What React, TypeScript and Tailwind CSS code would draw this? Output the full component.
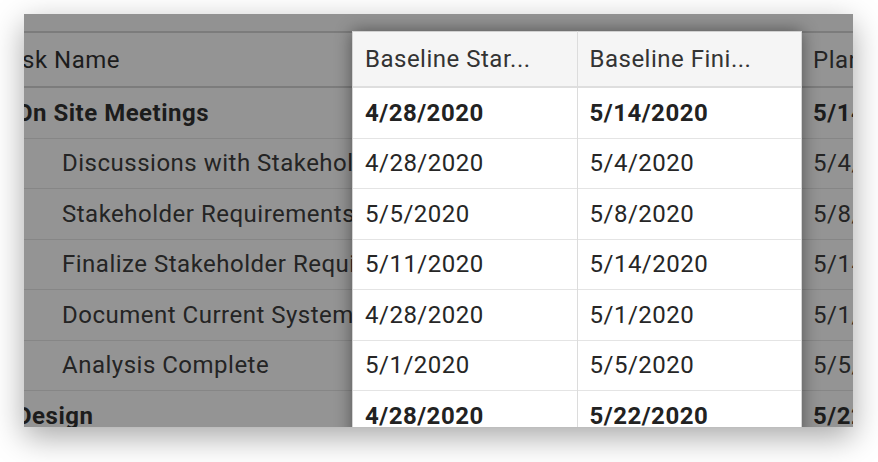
import React from "react";

type Row = { name: string; bold?: boolean; child?: boolean; bs: string; bf: string; p: string };

const rows: Row[] = [
  { name: "On Site Meetings", bold: true, bs: "4/28/2020", bf: "5/14/2020", p: "5/14/2020" },
  { name: "Discussions with Stakeholders", child: true, bs: "4/28/2020", bf: "5/4/2020", p: "5/4/2020" },
  { name: "Stakeholder Requirements", child: true, bs: "5/5/2020", bf: "5/8/2020", p: "5/8/2020" },
  { name: "Finalize Stakeholder Requirements", child: true, bs: "5/11/2020", bf: "5/14/2020", p: "5/14/2020" },
  { name: "Document Current Systems", child: true, bs: "4/28/2020", bf: "5/1/2020", p: "5/1/2020" },
  { name: "Analysis Complete", child: true, bs: "5/1/2020", bf: "5/5/2020", p: "5/5/2020" },
  { name: "Design", bold: true, bs: "4/28/2020", bf: "5/22/2020", p: "5/22/2020" },
];

const font = { fontFamily: "Roboto, 'Liberation Sans', sans-serif" };

export default function App() {
  return (
    <div className="w-[878px] h-[462px] bg-white pt-[14px] pl-[24px]" style={font}>
      <div className="w-[829px] h-[413px] overflow-hidden bg-[#949494] shadow-[0_10px_30px_rgba(0,0,0,0.35)] flex flex-col">
        <div className="h-[17px] shrink-0 bg-[#929292]" />
        <div className="flex flex-1 text-[24px] tracking-[0.5px] whitespace-nowrap">
          {/* Task column */}
          <div className="w-[328px] shrink-0 overflow-hidden text-[#1c1c1c]">
            <div className="h-[57px] border-t-2 border-b-2 border-[#7c7c7c] flex items-center ml-[-29px]">
              Task Name
            </div>
            {rows.map((r, i) => (
              <div
                key={i}
                className={`h-[50.5px] border-b border-[#868686] flex items-center ${r.child ? "pl-[38px] text-[#242424]" : "ml-[-8px] font-bold"}`}
              >
                {r.name}
              </div>
            ))}
          </div>
          {/* Highlighted panel */}
          <div className="relative z-10 w-[450px] shrink-0 bg-white border-l border-r border-[#d4d4d4] shadow-[0_0_16px_rgba(0,0,0,0.45)] flex text-[#262626]">
            {[0, 1].map((c) => (
              <div key={c} className={`flex-1 ${c === 0 ? "border-r border-[#dcdcdc]" : ""}`}>
                <div className="h-[57px] border-t border-[#d0d0d0] border-b-2 border-b-[#dedede] bg-[#f5f5f5] flex items-center pl-[12px] text-[#333]">
                  {c === 0 ? "Baseline Star..." : "Baseline Fini..."}
                </div>
                {rows.map((r, i) => (
                  <div
                    key={i}
                    className={`h-[50.5px] border-b border-[#e4e4e4] flex items-center pl-[12px] ${r.bold ? "font-bold text-[#222]" : ""}`}
                  >
                    {c === 0 ? r.bs : r.bf}
                  </div>
                ))}
              </div>
            ))}
          </div>
          {/* Planned column */}
          <div className="flex-1 overflow-hidden text-[#1c1c1c]">
            <div className="h-[57px] border-t-2 border-b-2 border-[#7c7c7c] flex items-center pl-[11px] text-[#242424]">
              Planned Start
            </div>
            {rows.map((r, i) => (
              <div
                key={i}
                className={`h-[50.5px] border-b border-[#868686] flex items-center pl-[11px] ${r.bold ? "font-bold" : "text-[#242424]"}`}
              >
                {r.p}
              </div>
            ))}
          </div>
        </div>
      </div>
    </div>
  );
}
